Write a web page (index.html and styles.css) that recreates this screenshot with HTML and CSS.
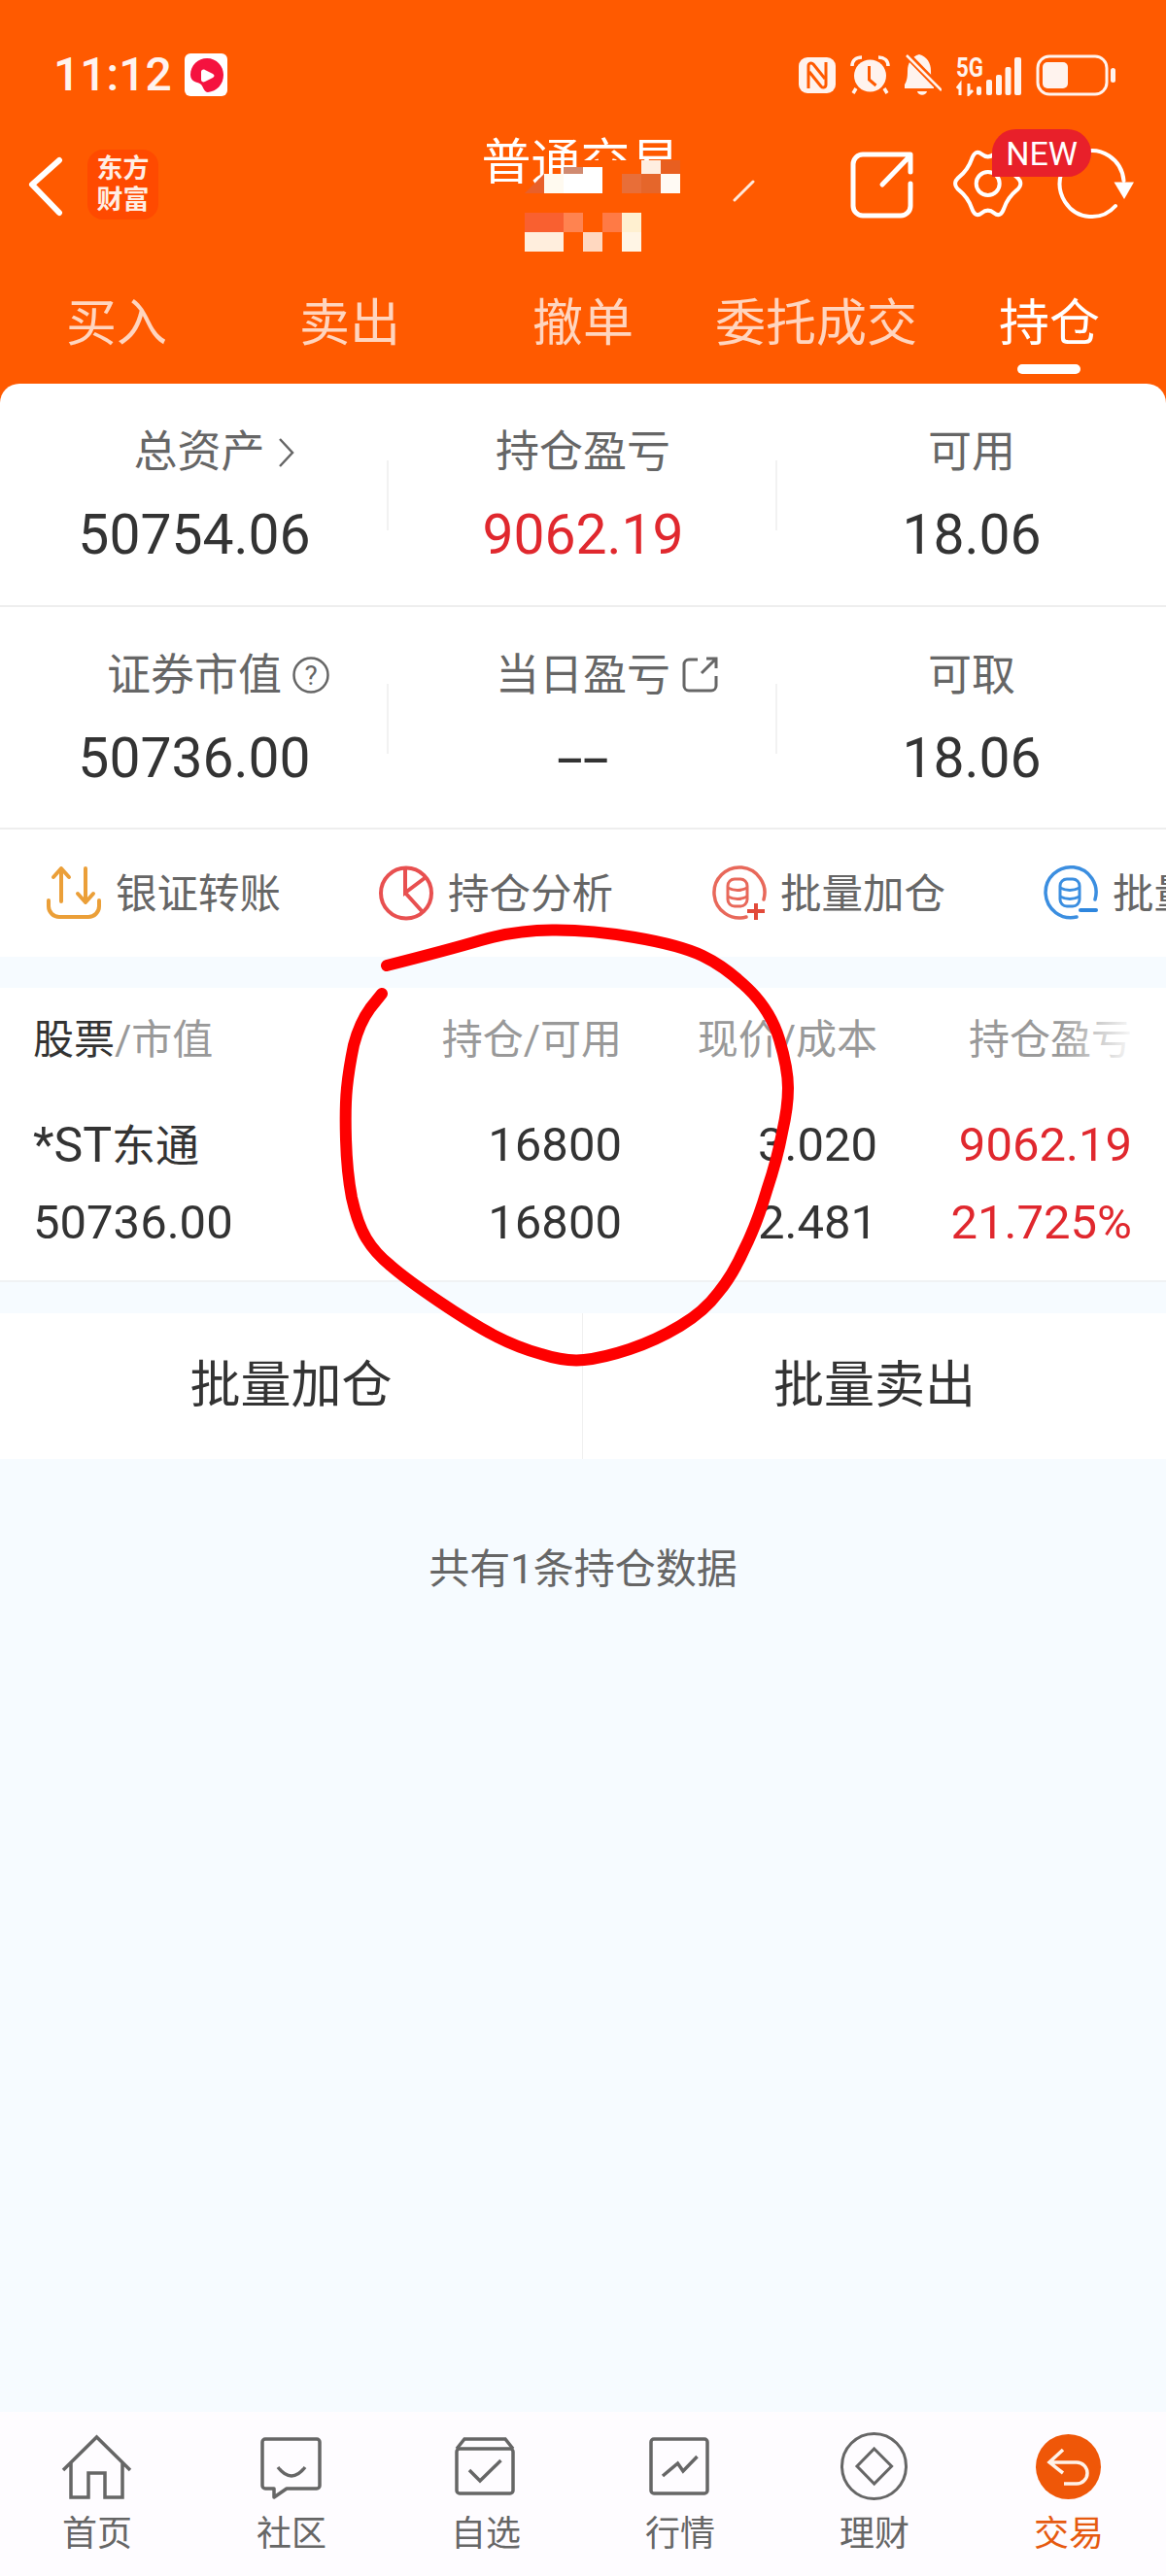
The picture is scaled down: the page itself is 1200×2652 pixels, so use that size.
FILE: index.html
```html
<!DOCTYPE html>
<html lang="en">
<head>
    <meta charset="UTF-8">
    <meta name="viewport" content="width=device-width, initial-scale=1.0">
    <title>普通交易</title>
    <link rel="stylesheet" href="styles.css">
</head>
<body>
    <div class="phone">
        <div class="top">
            <div class="status-bar">
                <div class="status-left">
                    <span class="clock">11:12</span>
                    <svg class="app-icon" viewBox="188 55 44 44">
                        <rect x="188" y="55" width="44" height="44" rx="6" fill="#fff"/>
                        <path d="M211 60c10 0 17 8 17 17 0 10-7 17-16 18-4 0-5-6-7-8-3-3-11-2-11-10 0-10 8-17 17-17z" fill="#f5123f"/>
                        <path d="M205 74c0-2 2-3 4-2l8 4c2 1 2 3 0 4l-8 4c-2 1-4 0-4-2z" fill="#fff"/>
                    </svg>
                </div>
                <div class="status-right">
                    <svg class="st-nfc" viewBox="824 59 38 37">
                        <rect x="824" y="59" width="38" height="37" rx="9" fill="#fff3ee"/>
                        <path d="M834 91V68c0-3 3-4 5-2l12 15M852 64v23c0 3-3 4-5 2l-12-15" fill="none" stroke="#ff5a00" stroke-width="3"/>
                    </svg>
                    <svg class="st-alarm" viewBox="877 57 41 40">
                        <circle cx="897.5" cy="78" r="16.5" fill="#fff3ee"/>
                        <path d="M879 68c0-6 4-9 10-9M916 68c0-6-4-9-10-9M883 91l-3 5M912 91l3 5" fill="none" stroke="#fff3ee" stroke-width="3.5"/>
                        <path d="M896.5 68v14l7 6" fill="none" stroke="#ff5a00" stroke-width="3"/>
                    </svg>
                    <svg class="st-bell" viewBox="933 57 38 42">
                        <path d="M948 57c-8 2-12 9-12 17 0 7-1 11-3 14v4h30v-4c-2-3-3-7-3-14 0-8-4-15-12-17z" fill="#fff3ee"/>
                        <path d="M946 95h10c-1 5-9 5-10 0z" fill="#fff3ee"/>
                        <path d="M935 57l36 37" stroke="#ff5a00" stroke-width="7"/>
                        <path d="M935 58l36 36" stroke="#fff3ee" stroke-width="2.5"/>
                    </svg>
                    <svg class="st-signal" viewBox="984 54 67 43">
                        <text class="net-label" x="984" y="77" textLength="28" lengthAdjust="spacingAndGlyphs">5G</text>
                        <path d="M988 96V85l-3 4M997 84v11l4-4" fill="none" stroke="#fff3ee" stroke-width="3"/>
                        <g fill="#fff3ee">
                            <rect x="1005" y="87" width="5" height="9" rx="2"/>
                            <rect x="1015" y="80" width="6" height="16" rx="2"/>
                            <rect x="1025" y="75" width="6" height="21" rx="2"/>
                            <rect x="1034.5" y="67" width="6" height="29" rx="2"/>
                            <rect x="1044" y="57" width="7" height="39" rx="2"/>
                        </g>
                    </svg>
                    <svg class="st-battery" viewBox="1066 55 82 43">
                        <rect x="1068" y="57" width="71" height="39" rx="12" fill="none" stroke="#fff3ee" stroke-width="3"/>
                        <rect x="1073" y="63" width="26" height="27" rx="5" fill="#fff3ee"/>
                        <rect x="1143" y="69" width="5" height="15" rx="2.5" fill="#fff3ee"/>
                    </svg>
                </div>
            </div>

            <div class="toolbar">
                <div class="toolbar-left">
                    <svg class="back-icon" viewBox="26 165 42 65">
                        <path d="M61 172L33 197l28 29" fill="none" stroke="#fff" stroke-width="6" stroke-linecap="round" stroke-linejoin="round"/>
                    </svg>
                    <div class="logo">东方<br>财富</div>
                </div>
                <div class="title">普通交易</div>
                <div class="toolbar-right">
                    <svg class="tool-share" viewBox="873 161 70 73">
                        <path d="M920 166H888a10 10 0 0 0-10 10V219a10 10 0 0 0 10 10H927a10 10 0 0 0 10-10V196M908 197L937 167M920 166H937V184" fill="none" stroke="#fff" stroke-width="5" stroke-linecap="round" stroke-linejoin="round"/>
                    </svg>
                    <svg class="tool-gear" viewBox="976 158 80 78">
                        <path d="M1045.95 203.15Q1054.7 196 1045.95 188.85Q1037.2 181.7 1033.45 171Q1029.7 160.3 1023.2 165.65Q1016.7 171 1010.2 165.65Q1003.7 160.3 999.95 171Q996.2 181.7 987.45 188.85Q978.7 196 987.45 203.15Q996.2 210.3 999.95 221Q1003.7 231.7 1010.2 226.35Q1016.7 221 1023.2 226.35Q1029.7 231.7 1033.45 221Q1037.2 210.3 1045.95 203.15Z" fill="none" stroke="#fff" stroke-width="4" stroke-linejoin="round"/>
                        <circle cx="1016.7" cy="196" r="12" fill="none" stroke="#fff" stroke-width="4"/>
                    </svg>
                    <svg class="tool-refresh" viewBox="1086 160 84 76">
                        <path d="M1148 220A33 34 0 1 1 1156.5 194" fill="none" stroke="#fff" stroke-width="4" stroke-linecap="round"/>
                        <path d="M1146.5 195.5H1167L1157 213z" fill="#fff"/>
                    </svg>
                    <span class="new-badge">NEW</span>
                </div>
                <!-- account number blurred out in the original -->
                <svg class="mosaic" viewBox="540 165 240 100">
                    <path d="M580 172h120v90H540v-63h20v-20h20z" fill="#ff5a00"/>
                    <rect x="600" y="165" width="100" height="14" fill="#ff5a00"/>
                    <rect x="580" y="172" width="20" height="7" fill="#d08a70"/>
                    <rect x="600" y="172" width="20" height="27" fill="#fff"/>
                    <rect x="560" y="179" width="20" height="20" fill="#fffaf0"/>
                    <rect x="580" y="179" width="20" height="20" fill="#fff"/>
                    <path d="M540 199h20v-20z" fill="#e8602a"/>
                    <rect x="640" y="179" width="20" height="20" fill="#e86e38"/>
                    <rect x="660" y="179" width="20" height="20" fill="#e5662b"/>
                    <rect x="680" y="179" width="20" height="20" fill="#fffaf4"/>
                    <rect x="660" y="165" width="20" height="14" fill="#ffeee0"/>
                    <rect x="680" y="165" width="20" height="14" fill="#e85f20"/>
                    <rect x="540" y="219" width="40" height="20" fill="#f96030"/>
                    <rect x="580" y="219" width="20" height="20" fill="#ff8350"/>
                    <rect x="620" y="219" width="20" height="20" fill="#ff7a45"/>
                    <rect x="640" y="219" width="20" height="20" fill="#fff0d0"/>
                    <rect x="540" y="239" width="40" height="20" fill="#ffeedd"/>
                    <rect x="600" y="239" width="20" height="20" fill="#ffd8c0"/>
                    <rect x="640" y="239" width="20" height="20" fill="#fff5e5"/>
                    <path d="M756 206L775 187" stroke="#ffe8da" stroke-width="3" stroke-linecap="round"/>
                </svg>
            </div>

            <div class="tabs">
                <div class="tab">买入</div>
                <div class="tab">卖出</div>
                <div class="tab">撤单</div>
                <div class="tab">委托成交</div>
                <div class="tab active">持仓</div>
            </div>
        </div>

        <div class="summary">
            <div class="stat-row">
                <div class="stat">
                    <div class="stat-label nudge">总资产
                        <svg class="label-icon icon-chevron" viewBox="284 448 17 32">
                            <path d="M286 450L299 464L286 478" fill="none" stroke="#666" stroke-width="2.5"/>
                        </svg>
                    </div>
                    <div class="stat-value">50754.06</div>
                </div>
                <div class="stat">
                    <div class="stat-label">持仓盈亏</div>
                    <div class="stat-value red">9062.19</div>
                </div>
                <div class="stat">
                    <div class="stat-label">可用</div>
                    <div class="stat-value">18.06</div>
                </div>
            </div>
            <div class="stat-row">
                <div class="stat">
                    <div class="stat-label">证券市值
                        <svg class="label-icon icon-help" viewBox="299 674 40 40">
                            <circle cx="319" cy="694" r="17.5" fill="none" stroke="#666" stroke-width="2.5"/>
                            <text class="help-mark" x="319" y="704" text-anchor="middle">?</text>
                        </svg>
                    </div>
                    <div class="stat-value">50736.00</div>
                </div>
                <div class="stat">
                    <div class="stat-label">当日盈亏
                        <svg class="label-icon icon-open" viewBox="701 673 39 39">
                            <path d="M718 677H709a5 5 0 0 0-5 5V704a5 5 0 0 0 5 5H732a5 5 0 0 0 5-5V694M722 691L737 676M727 676H737V686" fill="none" stroke="#666" stroke-width="3"/>
                        </svg>
                    </div>
                    <div class="stat-value"><span class="dash">--</span></div>
                </div>
                <div class="stat">
                    <div class="stat-label">可取</div>
                    <div class="stat-value">18.06</div>
                </div>
            </div>
        </div>

        <div class="actions">
            <div class="action">
                <svg viewBox="46 889 60 60">
                    <path d="M55 902L63 893V927M71 902L63 893M80 919L88 928V893M96 919L88 928M50 926V932a11 11 0 0 0 11 11H91a11 11 0 0 0 11-11V926" fill="none" stroke="#eb9f38" stroke-width="4" stroke-linecap="round" stroke-linejoin="round"/>
                </svg>
                <span>银证转账</span>
            </div>
            <div class="action">
                <svg viewBox="388 889 60 60">
                    <circle cx="418" cy="918.5" r="26" fill="none" stroke="#e85050" stroke-width="4"/>
                    <path d="M417 893V918L437 903M417 918L435 938" fill="none" stroke="#e85050" stroke-width="4"/>
                </svg>
                <span>持仓分析</span>
            </div>
            <div class="action">
                <svg viewBox="730 889 60 60">
                    <path d="M768 943A26 26 0 1 1 786 925" fill="none" stroke="#e8685a" stroke-width="3.5" stroke-linecap="round"/>
                    <rect x="749" y="904" width="20" height="28" rx="7" fill="none" stroke="#e8685a" stroke-width="3"/>
                    <path d="M749 913q10 5 20 0M749 922q10 5 20 0" fill="none" stroke="#e8685a" stroke-width="3"/>
                    <path d="M769 937H787M778 929V946" stroke="#e24a3a" stroke-width="4"/>
                </svg>
                <span>批量加仓</span>
            </div>
            <div class="action">
                <svg viewBox="1072 889 60 60">
                    <path d="M1108 943A26 26 0 1 1 1127 925" fill="none" stroke="#3b8ee0" stroke-width="3.5" stroke-linecap="round"/>
                    <rect x="1091" y="904" width="20" height="28" rx="7" fill="none" stroke="#3b8ee0" stroke-width="3"/>
                    <path d="M1091 913q10 5 20 0M1091 922q10 5 20 0" fill="none" stroke="#3b8ee0" stroke-width="3"/>
                    <path d="M1112 936H1128" stroke="#2e86de" stroke-width="4" stroke-linecap="round"/>
                </svg>
                <span>批量卖出</span>
            </div>
        </div>

        <div class="positions">
            <div class="pos-head">
                <div><span class="dark">股票</span>/市值</div>
                <div class="num">持仓/可用</div>
                <div class="num">现价/成本</div>
                <div class="num">持仓盈亏</div>
            </div>
            <div class="pos-fade"></div>
            <div class="pos-row">
                <div class="pos-name"><span class="pos-code">*ST</span>东通</div>
                <div class="num">16800</div>
                <div class="num">3.020</div>
                <div class="num red">9062.19</div>
            </div>
            <div class="pos-row">
                <div>50736.00</div>
                <div class="num">16800</div>
                <div class="num">2.481</div>
                <div class="num red">21.725%</div>
            </div>
        </div>

        <div class="bulk-btns">
            <div class="bulk-btn">批量加仓</div>
            <div class="bulk-btn">批量卖出</div>
        </div>

        <div class="hint">共有1条持仓数据</div>

        <div class="nav">
            <div class="nav-item">
                <svg viewBox="60 2504 80 70">
                    <path d="M65 2543L99.5 2509L134 2543M73 2535V2571H91V2546H108V2571H126V2535" fill="none" stroke="#666" stroke-width="3.5"/>
                </svg>
                <span>首页</span>
            </div>
            <div class="nav-item">
                <svg viewBox="260 2504 80 70">
                    <path d="M295 2562H326a3 3 0 0 0 3-3V2514a3 3 0 0 0-3-3H273a3 3 0 0 0-3 3V2559a3 3 0 0 0 3 3h9v9z" fill="none" stroke="#666" stroke-width="3.5" stroke-linejoin="round"/>
                    <path d="M286 2540Q300 2558 314 2540" fill="none" stroke="#666" stroke-width="3.5"/>
                </svg>
                <span>社区</span>
            </div>
            <div class="nav-item">
                <svg viewBox="460 2504 80 70">
                    <rect x="470" y="2521" width="58" height="46" rx="3" fill="none" stroke="#666" stroke-width="3.5"/>
                    <path d="M470 2521L478 2511H520L528 2521M483 2543L494 2554L515.5 2533" fill="none" stroke="#666" stroke-width="3.5"/>
                </svg>
                <span>自选</span>
            </div>
            <div class="nav-item">
                <svg viewBox="660 2504 80 70">
                    <rect x="670" y="2511" width="58" height="56" rx="3" fill="none" stroke="#666" stroke-width="3.5"/>
                    <path d="M682 2549L697.5 2536L703 2544L717.5 2529" fill="none" stroke="#666" stroke-width="3.5"/>
                </svg>
                <span>行情</span>
            </div>
            <div class="nav-item">
                <svg viewBox="860 2504 80 70">
                    <ellipse cx="899.5" cy="2539" rx="33" ry="33.5" fill="none" stroke="#666" stroke-width="3"/>
                    <path d="M899.7 2521L917.6 2539L899.7 2557L882 2539z" fill="none" stroke="#666" stroke-width="3"/>
                </svg>
                <span>理财</span>
            </div>
            <div class="nav-item active">
                <svg viewBox="1060 2504 80 70">
                    <circle cx="1099.5" cy="2539.5" r="33.5" fill="#ef5708"/>
                    <path d="M1094 2522L1080 2535L1094 2546M1080 2535H1108a11 11 0 0 1 0 22H1095" fill="none" stroke="#fff2e8" stroke-width="3.5"/>
                </svg>
                <span>交易</span>
            </div>
        </div>

        <!-- hand drawn ring on top of the screenshot -->
        <svg class="scribble" viewBox="0 0 1200 2652">
            <path d="M398 994Q461 978 495 968Q529 958 568 957.5Q607 957 653 965Q700 973 723 984Q746 995 769 1017Q793 1040 802 1070Q811 1100 811 1120Q811 1140 805 1166Q800 1193 789 1226Q779 1260 766 1286Q754 1313 739 1331Q725 1350 700 1365Q675 1380 648 1389Q621 1398 601 1400Q582 1402 557 1394Q532 1387 509 1375Q486 1363 452 1340Q418 1317 402 1303Q386 1290 377 1275Q368 1260 362 1233Q357 1207 356 1173Q355 1140 357 1120Q359 1100 364 1076Q370 1053 381 1038L393 1023" fill="none" stroke="#fe0000" stroke-width="12" stroke-linecap="round"/>
        </svg>
    </div>
</body>
</html>
```

FILE: styles.css
```css
:root {
    --orange: #ff5a00;
    --page-bg: #f6fbff;
    --text-dark: #333;
    --text-mid: #666;
    --text-light: #999;
    --red: #e0282e;
    --line: #eee;
}

body {
    margin: 0;
    font-family: Roboto, "Noto Sans CJK SC", sans-serif;
    color: var(--text-dark);
}

.phone {
    position: relative;
    display: flex;
    flex-direction: column;
    width: 1200px;
    height: 2652px;
    overflow: hidden;
    background: var(--page-bg);
}

.top {
    background: var(--orange);
    padding-bottom: 20px;
}

/* status bar */
.status-bar {
    display: flex;
    justify-content: space-between;
    align-items: center;
    height: 44px;
    padding: 55px 52px 0 55px;
}

.status-left {
    display: flex;
    align-items: center;
    gap: 13px;
}

.clock {
    font-size: 48px;
    font-weight: 500;
    line-height: 44px;
    color: #fff3ee;
}

.app-icon {
    width: 44px;
    height: 44px;
}

.status-right {
    display: flex;
    align-items: center;
    gap: 15px;
}

.st-nfc { width: 38px; height: 37px; }
.st-alarm { width: 41px; height: 40px; }
.st-bell { width: 38px; height: 42px; }
.st-signal { width: 67px; height: 43px; }
.st-battery { width: 82px; height: 43px; }

.net-label {
    font-size: 27px;
    font-weight: 700;
    fill: #fff3ee;
}

/* toolbar */
.toolbar {
    position: relative;
    display: grid;
    grid-template-columns: 1fr auto 1fr;
    height: 120px;
    margin-top: 31px;
}

.toolbar-left {
    display: flex;
    align-items: center;
    gap: 22px;
    padding-left: 26px;
}

.back-icon {
    width: 42px;
    height: 65px;
}

.logo {
    width: 73px;
    height: 72px;
    border-radius: 16px;
    background: #ff4a00;
    color: #ffeee4;
    font-size: 27px;
    font-weight: 700;
    line-height: 32px;
    text-align: center;
    padding-top: 4px;
    box-sizing: border-box;
}

.title {
    margin: 0 5px 0 0;
    padding-top: 8px;
    font-size: 51px;
    line-height: 60px;
    color: #fff;
}

.toolbar-right {
    position: relative;
    display: flex;
    align-items: center;
    justify-content: flex-end;
    padding-right: 30px;
}

.tool-share { width: 70px; height: 73px; margin-right: 33px; }
.tool-gear { width: 80px; height: 78px; margin-right: 30px; }
.tool-refresh { width: 84px; height: 76px; }

.new-badge {
    position: absolute;
    top: 3px;
    right: 77px;
    width: 102px;
    height: 49px;
    border-radius: 25px 25px 25px 0;
    background: #e8202a;
    color: #fff;
    font-size: 34px;
    line-height: 50px;
    text-align: center;
}

.mosaic {
    position: absolute;
    top: 35px;
    left: 540px;
    width: 240px;
    height: 100px;
}

/* tabs */
.tabs {
    display: flex;
    height: 105px;
    margin-top: 40px;
}

.tab {
    position: relative;
    flex: 1;
    text-align: center;
    font-size: 52px;
    line-height: 88px;
    color: rgba(255, 255, 255, 0.75);
}

.tab.active {
    color: #fff;
}

.tab.active::after {
    content: "";
    position: absolute;
    left: 87px;
    bottom: 10px;
    width: 65px;
    height: 10px;
    border-radius: 5px;
    background: #fff;
}

/* account summary */
.summary {
    margin-top: -20px;
    border-radius: 20px 20px 0 0;
    background: #fff;
}

.stat-row {
    display: grid;
    grid-template-columns: repeat(3, 1fr);
    height: 228px;
    border-bottom: 2px solid var(--line);
}

.stat-row + .stat-row {
    height: 227px;
}

.stat {
    position: relative;
    padding-top: 41px;
    text-align: center;
}

.stat:not(:last-child)::after {
    content: "";
    position: absolute;
    top: 79px;
    right: 0;
    width: 2px;
    height: 72px;
    background: #f2f2f2;
}

.stat-label {
    position: relative;
    display: inline-block;
    font-size: 45px;
    line-height: 60px;
    color: var(--text-mid);
}

.stat-label.nudge {
    margin-left: 10px;
}

.label-icon {
    position: absolute;
    top: 50%;
    left: 100%;
}

.icon-chevron { width: 17px; height: 32px; margin: -16px 0 0 13px; }
.icon-help { width: 40px; height: 40px; margin: -21px 0 0 10px; }
.icon-open { width: 39px; height: 39px; margin: -21px 0 0 11px; }

.help-mark {
    font-size: 28px;
    fill: #666;
}

.stat-value {
    margin-top: 20px;
    font-size: 57px;
    line-height: 70px;
}

.dash {
    display: inline-block;
    transform: scaleX(1.7);
}

.red {
    color: var(--red);
}

/* shortcut row */
.actions {
    display: flex;
    flex-shrink: 0;
    height: 131px;
    background: #fff;
    overflow: hidden;
}

.action {
    flex: 0 0 342px;
    display: flex;
    align-items: center;
    gap: 13px;
    padding-left: 46px;
    box-sizing: border-box;
    font-size: 42.5px;
    color: var(--text-mid);
    white-space: nowrap;
}

.action span {
    padding-bottom: 6px;
}

.action svg {
    flex-shrink: 0;
    width: 60px;
    height: 60px;
}

/* positions table */
.positions {
    position: relative;
    margin-top: 32px;
    padding: 24px 35px 20px 34px;
    background: #fff;
    border-bottom: 2px solid #f0f2f4;
}

.pos-head,
.pos-row {
    display: grid;
    grid-template-columns: 308px 298px 263px 262px;
}

.pos-head {
    margin-bottom: 39px;
    font-size: 42px;
    line-height: 60px;
    color: var(--text-light);
}

.pos-head .dark {
    color: var(--text-dark);
}

.pos-fade {
    position: absolute;
    top: 20px;
    right: 30px;
    width: 80px;
    height: 70px;
    background: linear-gradient(to right, rgba(255, 255, 255, 0), #fff);
}

.pos-row {
    font-size: 49px;
    line-height: 78px;
}

.pos-name {
    font-size: 45px;
}

.pos-code {
    font-size: 50px;
}

.num {
    text-align: right;
}

/* bulk buttons */
.bulk-btns {
    display: grid;
    grid-template-columns: 1fr 1fr;
    height: 150px;
    margin-top: 32px;
    background: #fff;
}

.bulk-btn {
    font-size: 52px;
    line-height: 150px;
    text-align: center;
}

.bulk-btn:first-child {
    border-right: 1px solid #f0f0f0;
}

.hint {
    flex: 1;
    padding-top: 84px;
    font-size: 42px;
    line-height: 60px;
    text-align: center;
    color: var(--text-mid);
}

/* bottom nav */
.nav {
    display: flex;
    height: 148px;
    padding-top: 21px;
    background: #fefcff;
}

.nav-item {
    flex: 1;
    display: flex;
    flex-direction: column;
    align-items: center;
    gap: 12px;
    font-size: 36px;
    line-height: 46px;
    color: var(--text-mid);
}

.nav-item svg {
    width: 80px;
    height: 70px;
}

.nav-item.active {
    color: #e65a10;
}

.scribble {
    position: absolute;
    top: 0;
    left: 0;
    width: 1200px;
    height: 2652px;
    pointer-events: none;
}
```
